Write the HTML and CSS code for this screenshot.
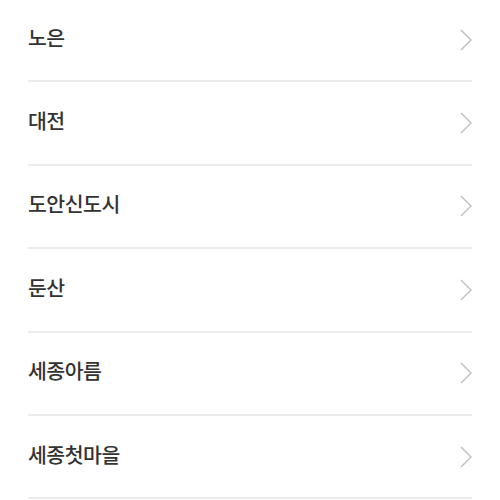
FILE: index.html
```html
<!DOCTYPE html>
<html lang="ko">

<head>
    <meta charset="UTF-8">
    <meta name="viewport" content="width=device-width, initial-scale=1.0">
    <title>지점 선택</title>
    <link rel="stylesheet" href="styles.css">
</head>

<body>
    <ul class="branch-list">
        <li class="branch-item">
            <span class="branch-name">노은</span>
            <svg class="chevron" viewBox="0 0 12 22"><path d="M1 1 L11 11 L1 21" /></svg>
        </li>
        <li class="branch-item">
            <span class="branch-name">대전</span>
            <svg class="chevron" viewBox="0 0 12 22"><path d="M1 1 L11 11 L1 21" /></svg>
        </li>
        <li class="branch-item">
            <span class="branch-name">도안신도시</span>
            <svg class="chevron" viewBox="0 0 12 22"><path d="M1 1 L11 11 L1 21" /></svg>
        </li>
        <li class="branch-item">
            <span class="branch-name">둔산</span>
            <svg class="chevron" viewBox="0 0 12 22"><path d="M1 1 L11 11 L1 21" /></svg>
        </li>
        <li class="branch-item">
            <span class="branch-name">세종아름</span>
            <svg class="chevron" viewBox="0 0 12 22"><path d="M1 1 L11 11 L1 21" /></svg>
        </li>
        <li class="branch-item">
            <span class="branch-name">세종첫마을</span>
            <svg class="chevron" viewBox="0 0 12 22"><path d="M1 1 L11 11 L1 21" /></svg>
        </li>
    </ul>
</body>

</html>
```

FILE: styles.css
```css
* {
    margin: 0;
    padding: 0;
    box-sizing: border-box;
}

body {
    background-color: #fff;
    font-family: "Noto Sans CJK KR", "Noto Sans", sans-serif;
    overflow: hidden;
}

.branch-list {
    list-style: none;
    margin: -1px 28px 0 28px;
}

/* one row per branch */
.branch-item {
    height: 83.4px;
    display: flex;
    align-items: center;
    justify-content: space-between;
    border-bottom: 2px solid #ebebeb;
}

.branch-name {
    font-size: 20.5px;
    font-weight: 500;
    color: #333;
    letter-spacing: -0.5px;
    margin-top: -6px;
}

.chevron {
    width: 12px;
    height: 22px;
    fill: none;
    stroke: #c2c2c2;
    stroke-width: 1.5;
}
```
